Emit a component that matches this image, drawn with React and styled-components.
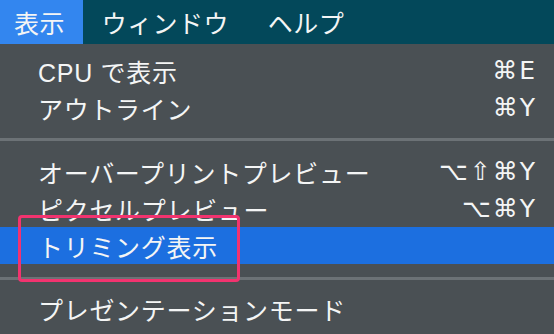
import React from "react";
import styled, { createGlobalStyle } from "styled-components";

const GlobalStyle = createGlobalStyle`
  html, body {
    margin: 0;
    padding: 0;
    background: #4a5054;
  }
  body {
    font-family: "Liberation Sans", "Noto Sans CJK JP", sans-serif;
    -webkit-font-smoothing: antialiased;
  }
`;

const Screen = styled.div`
  width: 554px;
  height: 334px;
  overflow: hidden;
  background: #4a5054;
  color: #f4f5f5;
`;

const MenuBar = styled.div`
  display: flex;
  align-items: stretch;
  height: 44px;
  background: #03485a;
`;

const BarItem = styled.div`
  display: flex;
  align-items: center;
  padding: 0 ${(props) => (props.active ? "18px" : "14px")} 0 ${(props) => (props.active ? "14px" : "19px")};
  background: ${(props) => (props.active ? "#3386ef" : "transparent")};
  font-size: 25px;
  letter-spacing: 0.4px;
  margin-right: ${(props) => props.gap || 0}px;
`;

const Menu = styled.div`
  display: flex;
  flex-direction: column;
  padding-top: 8px;
`;

const Row = styled.div`
  position: relative;
  display: flex;
  align-items: center;
  justify-content: space-between;
  height: 37px;
  padding: 0 17px 0 38px;
  background: ${(props) => (props.selected ? "#1c6fe0" : "transparent")};
  font-size: 25px;
  letter-spacing: 0.7px;
`;

const Label = styled.span`
  white-space: nowrap;
`;

const Shortcut = styled.span`
  font-family: "DejaVu Sans", "Liberation Sans", sans-serif;
  font-size: 25px;
  letter-spacing: 2px;
  white-space: nowrap;
`;

const Separator = styled.div`
  height: 3px;
  background: #6c7276;
  margin: ${(props) => props.top}px 0 ${(props) => props.bottom}px;
`;

const Callout = styled.div`
  position: absolute;
  left: 18px;
  top: -12px;
  width: 222px;
  height: 67px;
  box-sizing: border-box;
  border: 3px solid #f2336f;
  border-radius: 4px;
  pointer-events: none;
`;

function Item({ label, keys, selected, children }) {
  return (
    <Row selected={selected}>
      <Label>{label}</Label>
      {keys && <Shortcut>{keys}</Shortcut>}
      {children}
    </Row>
  );
}

export default function App() {
  return (
    <Screen>
      <GlobalStyle />
      <MenuBar>
        <BarItem active>表示</BarItem>
        <BarItem gap={6}>ウィンドウ</BarItem>
        <BarItem>ヘルプ</BarItem>
      </MenuBar>
      <Menu>
        <Item label="CPU で表示" keys="⌘E" />
        <Item label="アウトライン" keys="⌘Y" />
        <Separator top={12} bottom={12} />
        <Item label="オーバープリントプレビュー" keys="⌥⇧⌘Y" />
        <Item label="ピクセルプレビュー" keys="⌥⌘Y" />
        <Item label="トリミング表示" selected>
          <Callout />
        </Item>
        <Separator top={13} bottom={10} />
        <Item label="プレゼンテーションモード" />
      </Menu>
    </Screen>
  );
}
